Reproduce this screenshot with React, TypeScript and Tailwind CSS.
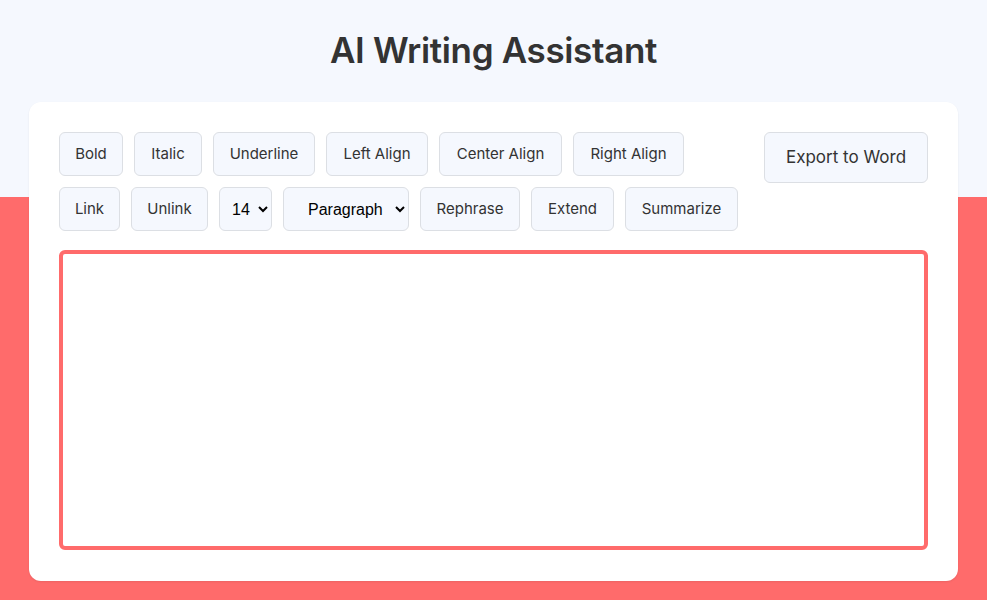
import React, { useState } from "react";

const btn =
  "h-[44px] rounded-md border border-[#dcdfe4] bg-[#f5f8fe] text-[15px] text-[#333] text-center hover:bg-[#eaf0fb] transition-colors";

const sel =
  "h-[44px] rounded-md border border-[#dcdfe4] bg-[#f5f8fe] text-[16px] text-black font-['Liberation_Sans',Arial,sans-serif]";

export default function App() {
  const [size, setSize] = useState("14");
  const [block, setBlock] = useState("p");

  return (
    <div className="min-h-[600px] w-full bg-[linear-gradient(to_bottom,#f5f8fe_197px,#ff6b6b_197px)] font-['Inter',sans-serif] pt-[29px] pb-[20px]">
      <h1 className="text-center text-[35px] leading-[42px] font-semibold text-[#333] tracking-[-0.01em]">
        AI Writing Assistant
      </h1>

      <div className="mx-[29px] mt-[31px] rounded-xl bg-white px-[30px] pt-[30px] pb-[31px] shadow-[0_1px_2px_rgba(0,0,0,0.08)]">
        {/* Toolbar */}
        <div className="flex items-start justify-between">
          <div className="flex flex-col gap-[11px]">
            <div className="flex gap-[11px]">
              <button className={`${btn} w-[64px]`}>Bold</button>
              <button className={`${btn} w-[68px]`}>Italic</button>
              <button className={`${btn} w-[102px]`}>Underline</button>
              <button className={`${btn} w-[102px]`}>Left Align</button>
              <button className={`${btn} w-[123px]`}>Center Align</button>
              <button className={`${btn} w-[111px]`}>Right Align</button>
            </div>
            <div className="flex gap-[11px]">
              <button className={`${btn} w-[61px]`}>Link</button>
              <button className={`${btn} w-[77px]`}>Unlink</button>
              <select
                value={size}
                onChange={(e) => setSize(e.target.value)}
                className={`${sel} w-[53px] pl-2`}
              >
                {["10", "12", "14", "16", "18", "24"].map((s) => (
                  <option key={s} value={s}>
                    {s}
                  </option>
                ))}
              </select>
              <select
                value={block}
                onChange={(e) => setBlock(e.target.value)}
                className={`${sel} w-[126px] pl-5`}
              >
                <option value="p">Paragraph</option>
                <option value="h1">Heading 1</option>
                <option value="h2">Heading 2</option>
                <option value="h3">Heading 3</option>
              </select>
              <button className={`${btn} w-[100px]`}>Rephrase</button>
              <button className={`${btn} w-[83px]`}>Extend</button>
              <button className={`${btn} w-[113px]`}>Summarize</button>
            </div>
          </div>
          <button className="h-[51px] w-[164px] rounded-md border border-[#dcdfe4] bg-[#f5f8fe] text-[17px] text-[#333]">
            Export to Word
          </button>
        </div>

        {/* Editor */}
        <div
          contentEditable
          suppressContentEditableWarning
          className="mt-[19px] h-[300px] rounded-md border-4 border-[#ff6b6b] bg-white p-3 text-[14px] text-[#333] outline-none overflow-auto"
        />
      </div>
    </div>
  );
}
